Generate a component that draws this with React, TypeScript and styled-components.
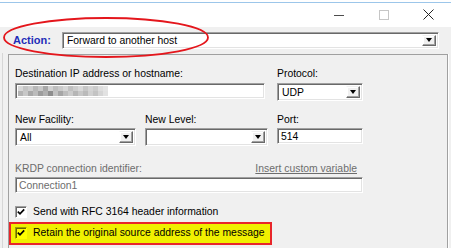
import React from "react";
import styled, { createGlobalStyle, css } from "styled-components";

const GlobalStyle = createGlobalStyle`
  html, body { margin: 0; padding: 0; }
  body {
    width: 451px; height: 248px; overflow: hidden; background: #f0f0f0;
    font-family: "Liberation Sans", Arial, sans-serif; font-size: 10.4px; color: #000;
  }
  * { box-sizing: border-box; }
`;

const Window = styled.div`
  position: relative; width: 451px; height: 248px; overflow: hidden;
  background: #f0f0f0; display: flex; flex-direction: column;
`;

const TitleBar = styled.div`
  flex: none; height: 27px; display: flex; justify-content: flex-end;
  background: linear-gradient(#fff 0 2px, #9cc6ea 2px 3px, #fff 3px);
`;

const CaptionButton = styled.div`
  width: 45px; height: 27px; padding-top: 2px;
  display: flex; align-items: center; justify-content: center;
`;

const ActionRow = styled.div`
  flex: none; height: 26px; display: flex; align-items: center;
  padding-left: 13px; gap: 11px;
`;

const ActionLabel = styled.span`
  font-size: 11px; font-weight: bold; color: #1f2db8; line-height: 13px;
`;

const Frame = styled.div`
  flex: 1; margin-left: 2px; border-left: 1px solid #d6d6d6;
  padding: 1px 0 0 5px;
`;

const Panel = styled.div`
  width: 440px; height: 260px;
  border: 1px solid #a0a0a0; border-bottom: none;
  box-shadow: 1px 0 0 #fff;
  padding: 12px 0 0 6px;
  display: flex; flex-direction: column;
`;

const Row = styled.div<{ $mt?: number }>`
  display: grid; grid-template-columns: 121px 123px 86px; column-gap: 9px;
  align-items: start; margin-top: ${(p) => p.$mt ?? 0}px;
`;

const Field = styled.div<{ $gap: number; $span?: number }>`
  display: flex; flex-direction: column; gap: ${(p) => p.$gap}px;
  ${(p) => p.$span && css`grid-column: span ${p.$span};`}
`;

const Label = styled.div<{ $disabled?: boolean }>`
  line-height: 13px; height: 13px; white-space: nowrap;
  color: ${(p) => (p.$disabled ? "#6d6d6d" : "#000")};
  display: flex; justify-content: space-between;
`;

const LinkText = styled.span`
  color: #6d6d6d; text-decoration: underline; margin-right: 6px;
`;

const sunken = css`
  border: 1px solid; border-color: #a0a0a0 #fff #fff #a0a0a0;
  box-shadow: inset 1px 1px 0 #696969, inset -1px -1px 0 #e3e3e3;
  background: #fff;
`;

const TextBox = styled.div<{ $w?: number; $h?: number; $disabled?: boolean }>`
  ${sunken};
  width: ${(p) => (p.$w ? `${p.$w}px` : "100%")};
  height: ${(p) => p.$h ?? 16}px;
  padding: 0 0 0 3px;
  display: flex; align-items: center; white-space: nowrap; overflow: hidden;
  color: ${(p) => (p.$disabled ? "#6d6d6d" : "#000")};
  line-height: 13px;
`;

const Combo = styled.div<{ $w?: number; $h?: number }>`
  ${sunken};
  width: ${(p) => (p.$w ? `${p.$w}px` : "100%")};
  height: ${(p) => p.$h ?? 18}px;
  padding: 2px 2px 2px 3px;
  display: flex; align-items: center; white-space: nowrap;
  line-height: 13px;
`;

const ComboText = styled.span`
  flex: 1; padding-left: 1px;
`;

const DropButton = styled.span`
  flex: none; width: 14px; height: 100%;
  background: #f0f0f0;
  border: 1px solid; border-color: #f0f0f0 #696969 #696969 #fff;
  box-shadow: inset -1px -1px 0 #a0a0a0, inset 1px 1px 0 #fff;
  display: flex; align-items: center; justify-content: center;
  &::after {
    content: ""; display: block; width: 0; height: 0;
    border-left: 3.5px solid transparent; border-right: 3.5px solid transparent;
    border-top: 4px solid #000; margin-top: 0;
  }
`;

const Mosaic = styled.div`
  display: grid; grid-template-columns: repeat(18, 5px); grid-auto-rows: 5px;
  margin-left: -1px;
`;

const Pixel = styled.span<{ $shade: string }>`
  background: ${(p) => p.$shade};
`;

const CheckRow = styled.div<{ $mt: number; $highlight?: boolean }>`
  display: flex; align-items: center; gap: 6px; height: 15px;
  margin-top: ${(p) => p.$mt}px; line-height: 13px; white-space: nowrap;
  align-self: flex-start;
  ${(p) =>
    p.$highlight &&
    css`
      height: 23px; margin-left: -6px;
      padding: 1px 5px 3px 4px;
      background: #f0f000; border: 2px solid #e8262a;
    `}
`;

const CheckBox = styled.span<{ $highlight?: boolean }>`
  flex: none; width: 12px; height: 12px;
  border: 1px solid; border-color: ${(p) => (p.$highlight ? "#a0a000 #ffff00 #ffff00 #a0a000" : "#a0a0a0 #fff #fff #a0a0a0")};
  box-shadow: inset 1px 1px 0 ${(p) => (p.$highlight ? "#696900" : "#696969")};
  background: ${(p) => (p.$highlight ? "#ffff00" : "#fff")};
  display: flex; align-items: center; justify-content: center;
`;

const CheckText = styled.span`
  letter-spacing: 0;
`;

const Annotation = styled.svg`
  position: absolute; left: 0; top: 0; pointer-events: none;
`;

const mosaicShades = [
  "#d8d8d8", "#c4c4c4", "#cfcfcf", "#b8b8b8", "#c9c9c9", "#a8a8a8", "#d2d2d2", "#bebebe", "#cacaca",
  "#d6d6d6", "#c0c0c0", "#cdcdcd", "#d9d9d9", "#c6c6c6", "#d4d4d4", "#cbcbcb", "#dddddd", "#e4e4e4",
  "#b4b4b4", "#c8c8c8", "#a9a9a9", "#bcbcbc", "#9d9d9d", "#b0b0b0", "#8e8e8e", "#c2c2c2", "#a6a6a6",
  "#bdbdbd", "#cccccc", "#b6b6b6", "#c7c7c7", "#bababa", "#d0d0d0", "#c3c3c3", "#d5d5d5", "#e2e2e2",
];

const Check = () => (
  <svg width="8" height="8" viewBox="0 0 8 8">
    <path d="M0.8 3.6 L3 5.8 L7.2 1.4" stroke="#000" strokeWidth="1.7" fill="none" />
  </svg>
);

export default function App() {
  return (
    <Window>
      <GlobalStyle />
      <TitleBar>
        <CaptionButton>
          <svg width="10" height="10" viewBox="0 0 10 10">
            <rect x="0" y="5" width="10" height="1" fill="#4d4d4d" />
          </svg>
        </CaptionButton>
        <CaptionButton>
          <svg width="10" height="10" viewBox="0 0 10 10">
            <rect x="0.5" y="0.5" width="9" height="9" fill="none" stroke="#c6c6c6" />
          </svg>
        </CaptionButton>
        <CaptionButton>
          <svg width="11" height="11" viewBox="0 0 11 11">
            <path d="M0.5 0.5 L10.5 10.5 M10.5 0.5 L0.5 10.5" stroke="#222" strokeWidth="1" />
          </svg>
        </CaptionButton>
      </TitleBar>

      <ActionRow>
        <ActionLabel>Action:</ActionLabel>
        <Combo $w={377} $h={17}>
          <ComboText>Forward to another host</ComboText>
          <DropButton />
        </Combo>
      </ActionRow>

      <Frame>
        <Panel>
          <Row>
            <Field $gap={3} $span={2}>
              <Label>Destination IP address or hostname:</Label>
              <TextBox $w={250}>
                <Mosaic>
                  {mosaicShades.map((s, i) => (
                    <Pixel key={i} $shade={s} />
                  ))}
                </Mosaic>
              </TextBox>
            </Field>
            <Field $gap={3}>
              <Label>Protocol:</Label>
              <Combo>
                <ComboText>UDP</ComboText>
                <DropButton />
              </Combo>
            </Field>
          </Row>

          <Row $mt={12}>
            <Field $gap={2}>
              <Label>New Facility:</Label>
              <Combo>
                <ComboText>All</ComboText>
                <DropButton />
              </Combo>
            </Field>
            <Field $gap={2}>
              <Label>New Level:</Label>
              <Combo>
                <ComboText />
                <DropButton />
              </Combo>
            </Field>
            <Field $gap={2}>
              <Label>Port:</Label>
              <TextBox>514</TextBox>
            </Field>
          </Row>

          <Row $mt={16}>
            <Field $gap={2} $span={3}>
              <Label $disabled>
                <span>KRDP connection identifier:</span>
                <LinkText>Insert custom variable</LinkText>
              </Label>
              <TextBox $disabled>Connection1</TextBox>
            </Field>
          </Row>

          <CheckRow $mt={11}>
            <CheckBox>
              <Check />
            </CheckBox>
            <CheckText>Send with RFC 3164 header information</CheckText>
          </CheckRow>

          <CheckRow $mt={3} $highlight>
            <CheckBox $highlight>
              <Check />
            </CheckBox>
            <CheckText>Retain the original source address of the message</CheckText>
          </CheckRow>
        </Panel>
      </Frame>

      <Annotation width="451" height="248" viewBox="0 0 451 248">
        <ellipse cx="106" cy="37.5" rx="102" ry="19.5" fill="none" stroke="#e4161c" strokeWidth="1.8" />
      </Annotation>
    </Window>
  );
}
